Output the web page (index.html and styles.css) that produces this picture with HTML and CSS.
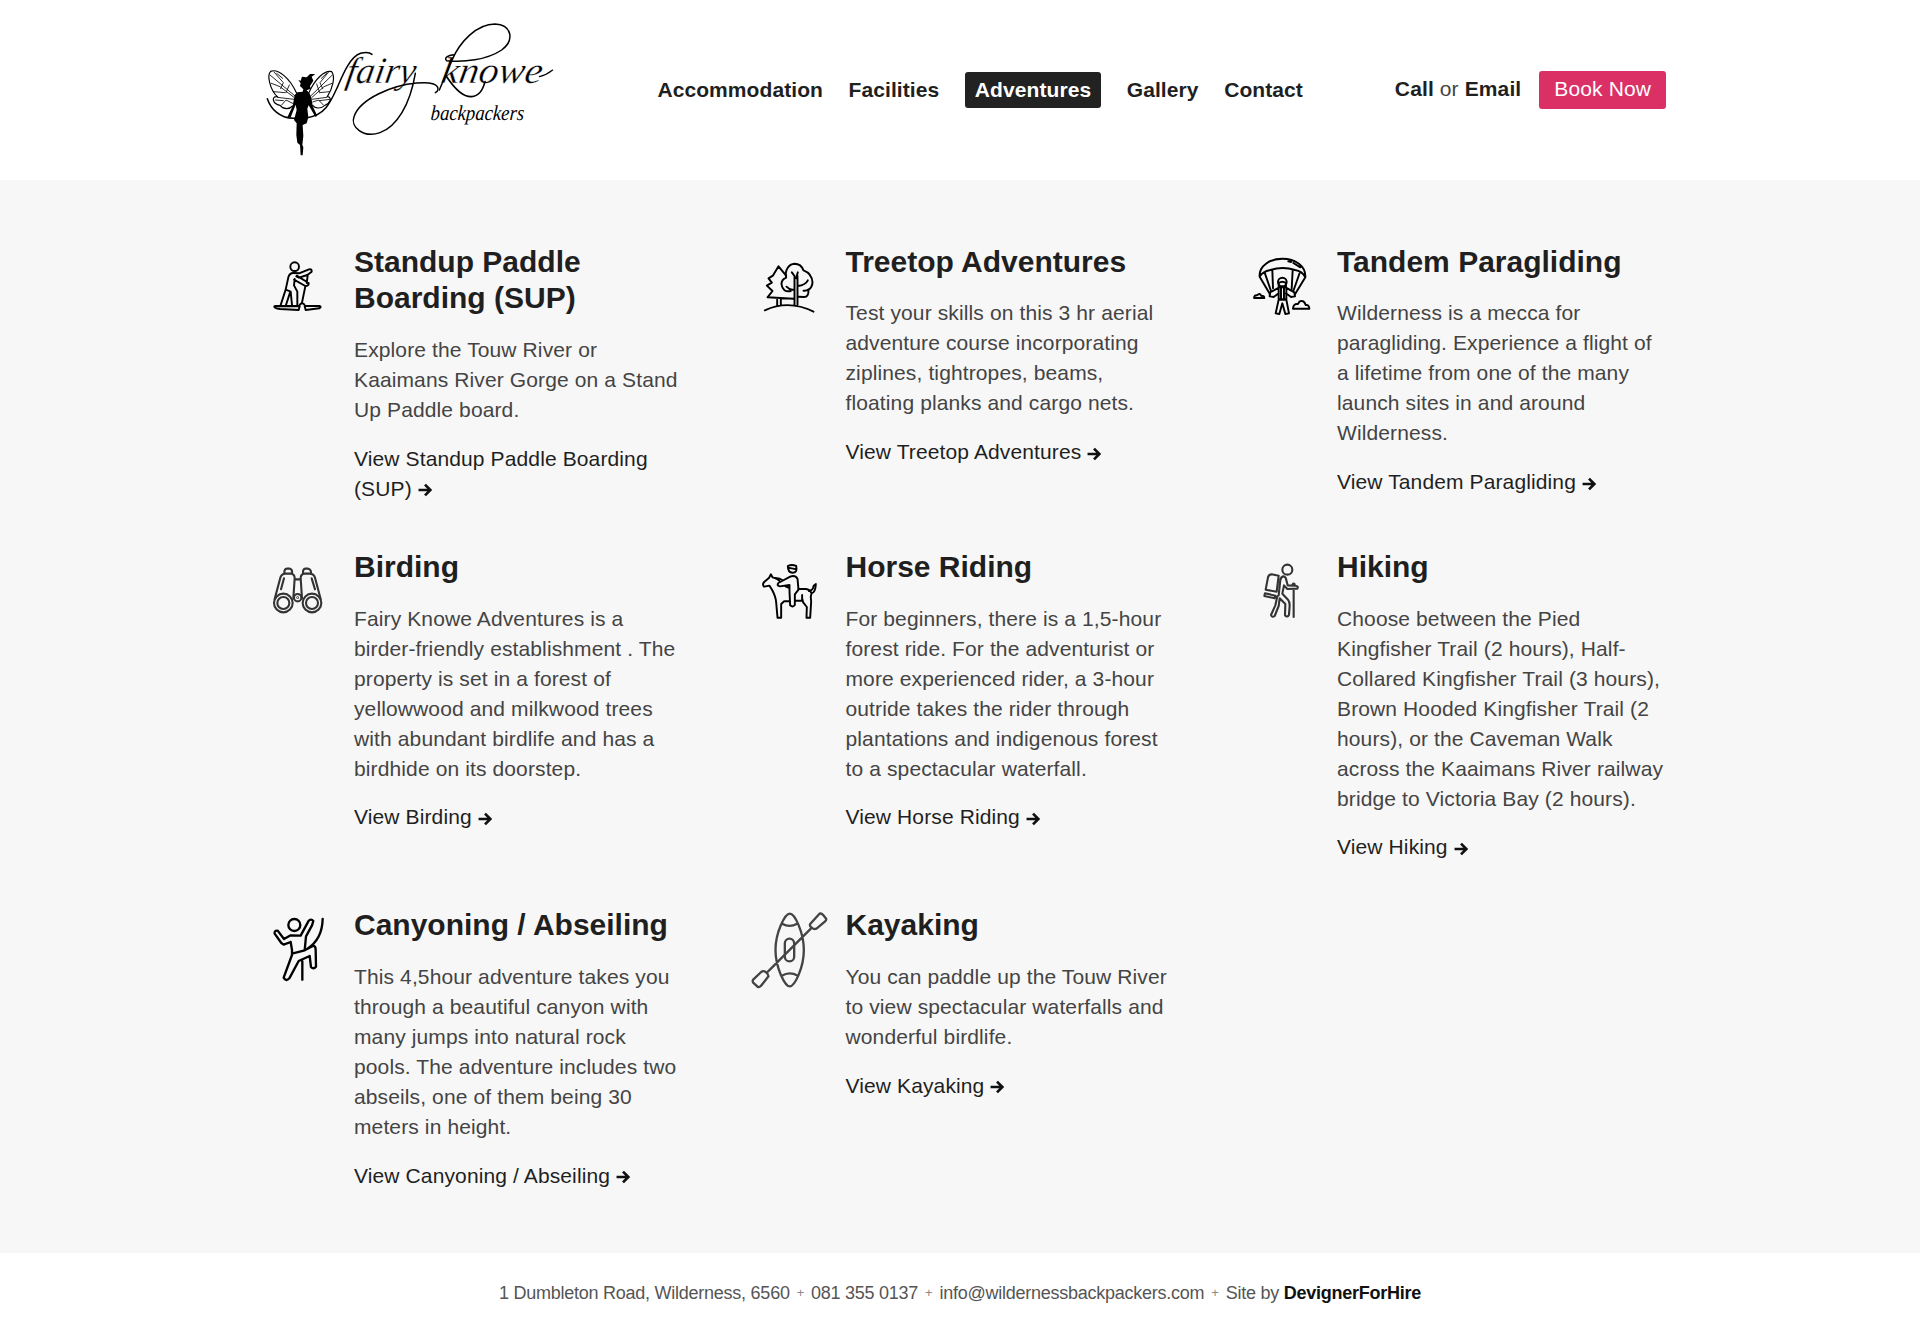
FILE: index.html
```html
<!DOCTYPE html>
<html lang="en">
<head>
<meta charset="utf-8">
<title>Adventures | Fairy Knowe Backpackers</title>
<link rel="stylesheet" href="styles.css">
</head>
<body>
<header class="header">
  <a class="logo" href="#">
    <svg width="320" height="160" viewBox="0 0 960 480" aria-label="Fairy Knowe Backpackers">
      <text class="logo-name" transform="translate(284 219) skewX(-10)" textLength="208" lengthAdjust="spacingAndGlyphs">fairy</text>
      <text class="logo-name" transform="translate(570 219) skewX(-10)" textLength="302" lengthAdjust="spacingAndGlyphs">knowe</text>
      <text class="logo-sub" transform="translate(541 331) skewX(-4)" textLength="280" lengthAdjust="spacingAndGlyphs">backpackers</text>
      <g fill="none" stroke="#000" stroke-linecap="round">
        <g stroke-width="3.5">
          <path d="M140 250C120 205 85 175 62 184C50 195 60 240 82 260C62 258 68 282 90 286C102 300 118 298 128 288"/>
          <path d="M176 250C195 205 225 180 245 185C257 200 248 235 232 260C248 262 240 280 225 286C210 298 195 295 188 286"/>
          <path d="M60 195L135 258M72 186L100 218L92 236M80 190L98 205M118 225L108 248M64 220L90 230L132 262M72 245L105 248M82 262L132 268M95 285L108 270L128 280M76 270L100 272" stroke-width="2.5"/>
          <path d="M247 195L182 258M235 187L210 218L218 236M230 190L214 205M200 222L208 245M246 220L222 230L186 262M238 245L208 248M230 262L186 268M220 285L206 270L188 276M240 268L208 272" stroke-width="2.5"/>
        </g>
        <path d="M52 266C62 296 88 324 130 325L172 323C225 315 240 280 262 232C278 195 300 140 332 130C345 126 358 126 366 133" stroke-width="4.5"/>
        <path d="M496 190C480 285 440 350 390 368C340 385 300 350 312 320C330 265 430 225 500 219C535 216 556 220 562 230C566 238 564 244 556 248" stroke-width="4.5"/>
        <path d="M568 240L606 150C630 95 680 42 735 42C785 44 795 90 755 120C710 150 640 158 590 152C580 142 598 136 610 134" stroke-width="4.5"/>
        <path d="M590 200C610 230 635 262 665 260C690 258 700 235 705 215" stroke-width="5"/>
        <path d="M868 200C885 196 898 188 908 180" stroke-width="3.5"/>
      </g>
      <path d="M145 210L152 212L156 200L170 202L180 192L196 192L185 200L190 212L180 228L182 236L170 241L178 249L184 262L188 288L202 318L196 320L176 286L172 296L175 322L170 340L158 345L160 378L157 405L160 412L158 436L152 436L150 405L142 398L139 375L140 340L132 330L140 300L137 284L122 322L112 322L128 288L134 255L142 247L158 245L160 238L150 228L152 220Z"/>
    </svg>
  </a>
  <nav class="nav">
    <a href="#">Accommodation</a>
    <a href="#">Facilities</a>
    <a class="active" href="#">Adventures</a>
    <a href="#">Gallery</a>
    <a href="#">Contact</a>
  </nav>
  <div class="actions">
    <span><a href="#">Call</a> or <a href="#">Email</a></span>
    <a class="book" href="#">Book Now</a>
  </div>
</header>

<main class="main">
  <div class="grid">
    <article class="card">
      <svg class="icon" viewBox="0 0 270 270">
        <circle cx="119" cy="80" r="13"/>
        <path d="M77 195L92 149L100 112Q104 98 116 99L132 100L162 88Q171 86 170 95L157 105L132 113L124 109M119 117L117 136L127 155L127 195M117 119L151 138Q162 138 161 129L125 107M92 149L107 155L111 195M105 158L93 195M158 107L155 129M151 139L141 188"/>
        <path d="M60 198H132Q141 182 151 198H193Q201 201 193 205L152 210L149 199M134 199L131 210L75 207Q56 205 58 199Z"/>
      </svg>
      <div class="body">
        <h2>Standup Paddle Boarding (SUP)</h2>
        <p>Explore the Touw River or Kaaimans River Gorge on a Stand Up Paddle board.</p>
        <a class="more" href="#">View Standup Paddle Boarding (SUP) <svg class="arrow" viewBox="0 0 13 13"><path d="M0.5 6.5H11.5M6.5 1.5L11.5 6.5L6.5 11.5"/></svg></a>
      </div>
    </article>
    <article class="card">
      <svg class="icon" viewBox="4.5 0 270 270">
        <path d="M58 211Q130 178 204 215M95 179V196M106 179V196M147 194V108M156 194V108M144 176L66 172L81 153L64 137L79 128L69 115L82 107L99 79L122 107M147 108L139 97M152 115L157 97M147 148Q134 152 123 140M157 138Q180 135 187 121"/>
        <path d="M136 153Q112 158 108 133Q108 118 122 113C117 90 130 72 147 71Q167 71 174 91Q199 100 201 127Q200 143 189 149Q190 171 176 171L157 170M174 152Q184 153 189 148"/>
      </svg>
      <div class="body">
        <h2>Treetop Adventures</h2>
        <p>Test your skills on this 3 hr aerial adventure course incorporating ziplines, tightropes, beams, floating planks and cargo nets.</p>
        <a class="more" href="#">View Treetop Adventures <svg class="arrow" viewBox="0 0 13 13"><path d="M0.5 6.5H11.5M6.5 1.5L11.5 6.5L6.5 11.5"/></svg></a>
      </div>
    </article>
    <article class="card">
      <svg class="icon" viewBox="-6 0 270 270">
        <path d="M59 110C56 78 90 56 127 56C166 56 198 78 196 112Q187 93 165 90Q128 78 91 90Q67 95 59 110L90 163M74 98L93 153M97 91L99 145M158 91L155 147M179 99L160 153M196 112L165 163M145 64L153 66M160 69L181 82"/>
        <circle cx="127" cy="126" r="13"/>
        <path d="M116 129Q127 121 138 129V142H116ZM117 143L90 157L89 169L101 171L116 160M138 143L163 157L165 169L153 171L138 160M116 143V178H139V143M123 144V177M132 144V177M116 179L107 220L118 222L127 190L136 222L147 220L139 179ZM42 174H73Q72 166 64 168Q60 157 51 166Q43 165 42 174ZM159 206H208Q207 193 197 195Q192 179 179 184L174 192Q160 190 159 206Z"/>
      </svg>
      <div class="body">
        <h2>Tandem Paragliding</h2>
        <p>Wilderness is a mecca for paragliding. Experience a flight of a lifetime from one of the many launch sites in and around Wilderness.</p>
        <a class="more" href="#">View Tandem Paragliding <svg class="arrow" viewBox="0 0 13 13"><path d="M0.5 6.5H11.5M6.5 1.5L11.5 6.5L6.5 11.5"/></svg></a>
      </div>
    </article>
    <article class="card">
      <svg class="icon gray" viewBox="0 0 270 270">
        <circle cx="85" cy="174" r="28"/><circle cx="85" cy="174" r="18"/>
        <circle cx="171" cy="174" r="28"/><circle cx="171" cy="174" r="18"/>
        <circle cx="128" cy="158" r="11"/><circle cx="128" cy="158" r="1"/>
        <path d="M59 162L76 98Q80 86 92 86H110Q119 88 119 100L115 160M197 162L180 98Q176 86 164 86H146Q137 88 137 100L141 160M120 103H136M88 85Q87 72 96 71H105Q113 73 111 85M144 85Q143 72 151 71H160Q169 73 168 85M87 100L78 133M170 100L180 133"/>
      </svg>
      <div class="body">
        <h2>Birding</h2>
        <p>Fairy Knowe Adventures is a birder-friendly establishment . The property is set in a forest of yellowwood and milkwood trees with abundant birdlife and has a birdhide on its doorstep.</p>
        <a class="more" href="#">View Birding <svg class="arrow" viewBox="0 0 13 13"><path d="M0.5 6.5H11.5M6.5 1.5L11.5 6.5L6.5 11.5"/></svg></a>
      </div>
    </article>
    <article class="card">
      <svg class="icon" viewBox="4.5 0 270 270">
        <path d="M127 63Q139 57 152 63Q157 83 141 83Q127 83 127 63ZM128 68L153 73"/>
        <path d="M96 218H107V177L116 169H132M96 218L92 172Q91 156 80 135L72 122L56 125Q49 119 56 111L71 98L76 88L81 97Q98 101 104 111M104 111L134 95Q149 89 156 101L159 134L148 148V180Q142 188 134 181L132 139V120L103 124Q92 122 99 114M90 99Q103 99 111 106M120 124L132 129M158 132H181Q194 134 198 145Q210 143 211 117Q203 121 203 127Q203 135 190 138M198 145Q194 154 197 169L194 218H183L184 186L173 172Q168 160 170 150M148 167H171"/>
      </svg>
      <div class="body">
        <h2>Horse Riding</h2>
        <p>For beginners, there is a 1,5-hour forest ride. For the adventurist or more experienced rider, a 3-hour outride takes the rider through plantations and indigenous forest to a spectacular waterfall.</p>
        <a class="more" href="#">View Horse Riding <svg class="arrow" viewBox="0 0 13 13"><path d="M0.5 6.5H11.5M6.5 1.5L11.5 6.5L6.5 11.5"/></svg></a>
      </div>
    </article>
    <article class="card">
      <svg class="icon gray" viewBox="-6 0 270 270">
        <circle cx="142" cy="74" r="15"/>
        <path d="M116 92L95 88Q86 88 84 97L77 134L110 140ZM75 145L106 152L104 160L73 153ZM116 151L121 105Q123 94 131 94Q138 96 139 106L143 121L166 122Q177 124 172 131L142 132L132 121L127 146L144 164Q149 170 149 181L147 209Q142 219 135 211L136 177L119 160L116 183L104 213Q96 219 93 210L106 181L112 154M161 135V216M158 118Q161 113 164 118"/>
      </svg>
      <div class="body">
        <h2>Hiking</h2>
        <p>Choose between the Pied Kingfisher Trail (2 hours), Half-Collared Kingfisher Trail (3 hours), Brown Hooded Kingfisher Trail (2 hours), or the Caveman Walk across the Kaaimans River railway bridge to Victoria Bay (2 hours).</p>
        <a class="more" href="#">View Hiking <svg class="arrow" viewBox="0 0 13 13"><path d="M0.5 6.5H11.5M6.5 1.5L11.5 6.5L6.5 11.5"/></svg></a>
      </div>
    </article>
    <article class="card">
      <svg class="icon thick" viewBox="0 9 270 270">
        <circle cx="118" cy="75" r="18"/>
        <path d="M107 126L86 134L79 129L59 101Q57 91 68 92L87 117L107 106L137 107L160 64Q168 54 175 63L171 76L153 109L149 151L175 137Q183 139 182 151L183 200Q175 209 168 201L164 168L131 183L103 235Q93 246 86 233L111 165V150L107 126M111 161L149 151M203 57C202 100 184 129 157 146M142 184V239"/>
      </svg>
      <div class="body">
        <h2>Canyoning / Abseiling</h2>
        <p>This 4,5hour adventure takes you through a beautiful canyon with many jumps into natural rock pools. The adventure includes two abseils, one of them being 30 meters in height.</p>
        <a class="more" href="#">View Canyoning / Abseiling <svg class="arrow" viewBox="0 0 13 13"><path d="M0.5 6.5H11.5M6.5 1.5L11.5 6.5L6.5 11.5"/></svg></a>
      </div>
    </article>
    <article class="card">
      <svg class="icon kayak" viewBox="19.5 9 270 270">
        <path d="M148 41C163 41 190 98 190 150S163 259 148 259S105 202 105 150S133 41 148 41ZM125 71Q147 84 170 71M124 227Q147 213 172 227M83 214L211 86M209 72L237 41Q243 39 248 45L257 56Q258 61 253 65L228 86Q220 89 215 84Q206 79 209 72ZM38 239L62 216Q68 211 76 216Q84 222 84 229L61 258Q56 263 51 260L38 248Q35 243 38 239Z"/>
        <rect x="133" y="116" width="28" height="68" rx="14"/>
      </svg>
      <div class="body">
        <h2>Kayaking</h2>
        <p>You can paddle up the Touw River to view spectacular waterfalls and wonderful birdlife.</p>
        <a class="more" href="#">View Kayaking <svg class="arrow" viewBox="0 0 13 13"><path d="M0.5 6.5H11.5M6.5 1.5L11.5 6.5L6.5 11.5"/></svg></a>
      </div>
    </article>
  </div>
</main>

<footer class="footer">
  <span>1 Dumbleton Road, Wilderness, 6560</span><i>+</i><span>081 355 0137</span><i>+</i><span>info@wildernessbackpackers.com</span><i>+</i><span>Site by <b>DevignerForHire</b></span>
</footer>
</body>
</html>
```
FILE: styles.css
```css
* { box-sizing: border-box; }

body {
  margin: 0;
  background: #fff;
  color: #444;
  font: 21px/30px "Liberation Sans", Arial, sans-serif;
  letter-spacing: 0.12px;
}

a { color: #1f1f1f; text-decoration: none; }

.header {
  display: flex;
  align-items: center;
  height: 180px;
  padding: 0 254px 0 250px;
}

.logo { width: 320px; height: 160px; }
.logo svg { display: block; }
.logo-name, .logo-sub { font-family: "Liberation Serif", "Times New Roman", serif; font-style: italic; letter-spacing: 0; }
.logo-name { font-size: 112px; stroke: #fff; stroke-width: 1px; }
.logo-sub { font-size: 64px; }

.nav { display: flex; gap: 25.6px; margin-left: 87.4px; font-weight: bold; letter-spacing: 0.08px; }
.nav a { padding: 3px 0; border-radius: 3px; }
.nav .active { padding: 3px 10px; background: #222; color: #fff; }

.actions { display: flex; align-items: center; margin-left: auto; gap: 18px; }
.actions span a { font-weight: bold; }
.actions span { margin-top: -2px; }
.actions .book {
  padding: 3px 15px 5px;
  border-radius: 3px;
  background: #da3066;
  color: #fff;
}

.main { height: 1073px; padding: 63.5px 236px 0 255px; background: #f7f7f7; }

.grid {
  display: grid;
  grid-template-columns: repeat(3, 429px);
  column-gap: 62.5px;
  row-gap: 44.8px;
}

.card { display: grid; grid-template-columns: 90px 330px; column-gap: 9px; align-items: start; }

.icon {
  width: 90px;
  height: 90px;
  margin-top: -3.6px;
  overflow: visible;
  fill: none;
  stroke: #000;
  stroke-width: 5.8;
  stroke-linecap: round;
  stroke-linejoin: round;
}
.icon.gray { stroke: #333; stroke-width: 6.3; }
.icon.kayak { stroke: #444; stroke-width: 7; }
.icon.thick { stroke-width: 7; }

h2 { margin: 0 0 18px; color: #1f1f1f; font-size: 30px; line-height: 36.9px; letter-spacing: 0; }
p { margin: 0 0 18.6px; }

.more { display: block; }
.arrow { width: 14px; height: 14px; vertical-align: -1.5px; fill: none; stroke: #111; stroke-width: 2.5; }

.footer {
  display: flex;
  justify-content: center;
  padding-top: 25px;
  font-size: 18px;
  letter-spacing: -0.25px;
  color: #555;
}
.footer i { margin: 0 7px; color: #888; font-style: normal; font-size: 13px; }
.footer b { color: #111; }
```
